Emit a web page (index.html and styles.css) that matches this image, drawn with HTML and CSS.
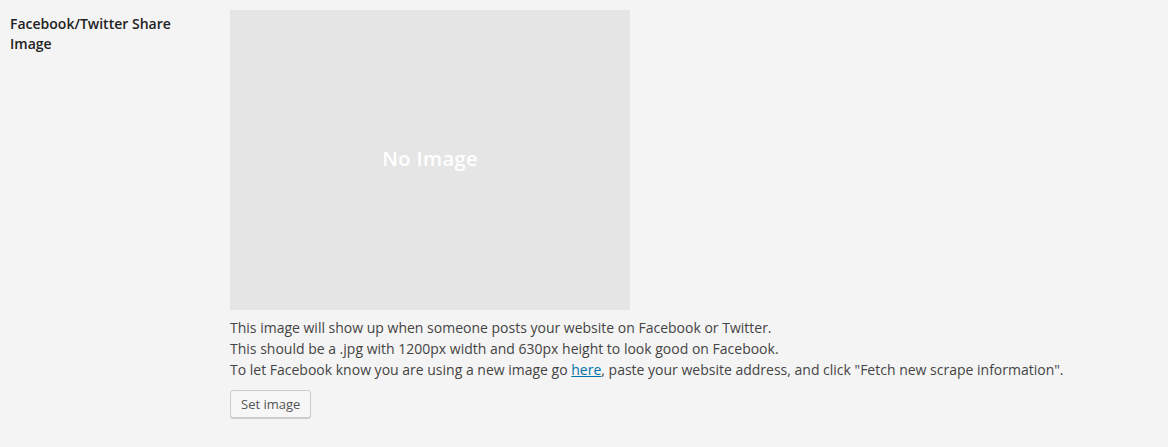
FILE: index.html
```html
<!DOCTYPE html>
<html lang="en">
<head>
  <meta charset="UTF-8">
  <title>Share Image</title>
  <link rel="stylesheet" href="styles.css">
</head>
<body>
  <div class="form-row">
    <div class="form-label">Facebook/Twitter Share Image</div>
    <div class="form-field">
      <div class="image-preview">
        <span>No Image</span>
      </div>
      <p class="description">
        This image will show up when someone posts your website on Facebook or Twitter.<br>
        This should be a .jpg with 1200px width and 630px height to look good on Facebook.<br>
        To let Facebook know you are using a new image go <a href="#">here</a>, paste your website address, and click "Fetch new scrape information".
      </p>
      <button class="button">Set image</button>
    </div>
  </div>
</body>
</html>
```

FILE: styles.css
```css
body {
  margin: 0;
  background-color: #f4f4f4;
  font-family: 'Open Sans', sans-serif;
  color: #444;
  font-size: 14px;
}

.form-row {
  display: flex;
  padding: 10px;
}

.form-label {
  width: 200px;
  flex-shrink: 0;
  padding-top: 4px;
  font-weight: 600;
  line-height: 20px;
  color: #222;
}

.form-field {
  margin-left: 20px;
}

.image-preview {
  width: 400px;
  height: 300px;
  background-color: #e5e5e5;
  display: flex;
  align-items: center;
  justify-content: center;
}

.image-preview span {
  color: #fff;
  font-size: 20px;
  font-weight: 600;
  letter-spacing: 0.4px;
  padding-bottom: 4px;
}

.description {
  margin: 7px 0 10px;
  line-height: 21px;
}

.description a {
  color: #0073aa;
}

.button {
  height: 28px;
  padding: 0 10px 1px;
  font-family: 'Open Sans', sans-serif;
  font-size: 13px;
  color: #555;
  background-color: #f7f7f7;
  border: 1px solid #ccc;
  border-radius: 3px;
  box-shadow: 0 1px 0 #ccc;
  cursor: pointer;
}
```
